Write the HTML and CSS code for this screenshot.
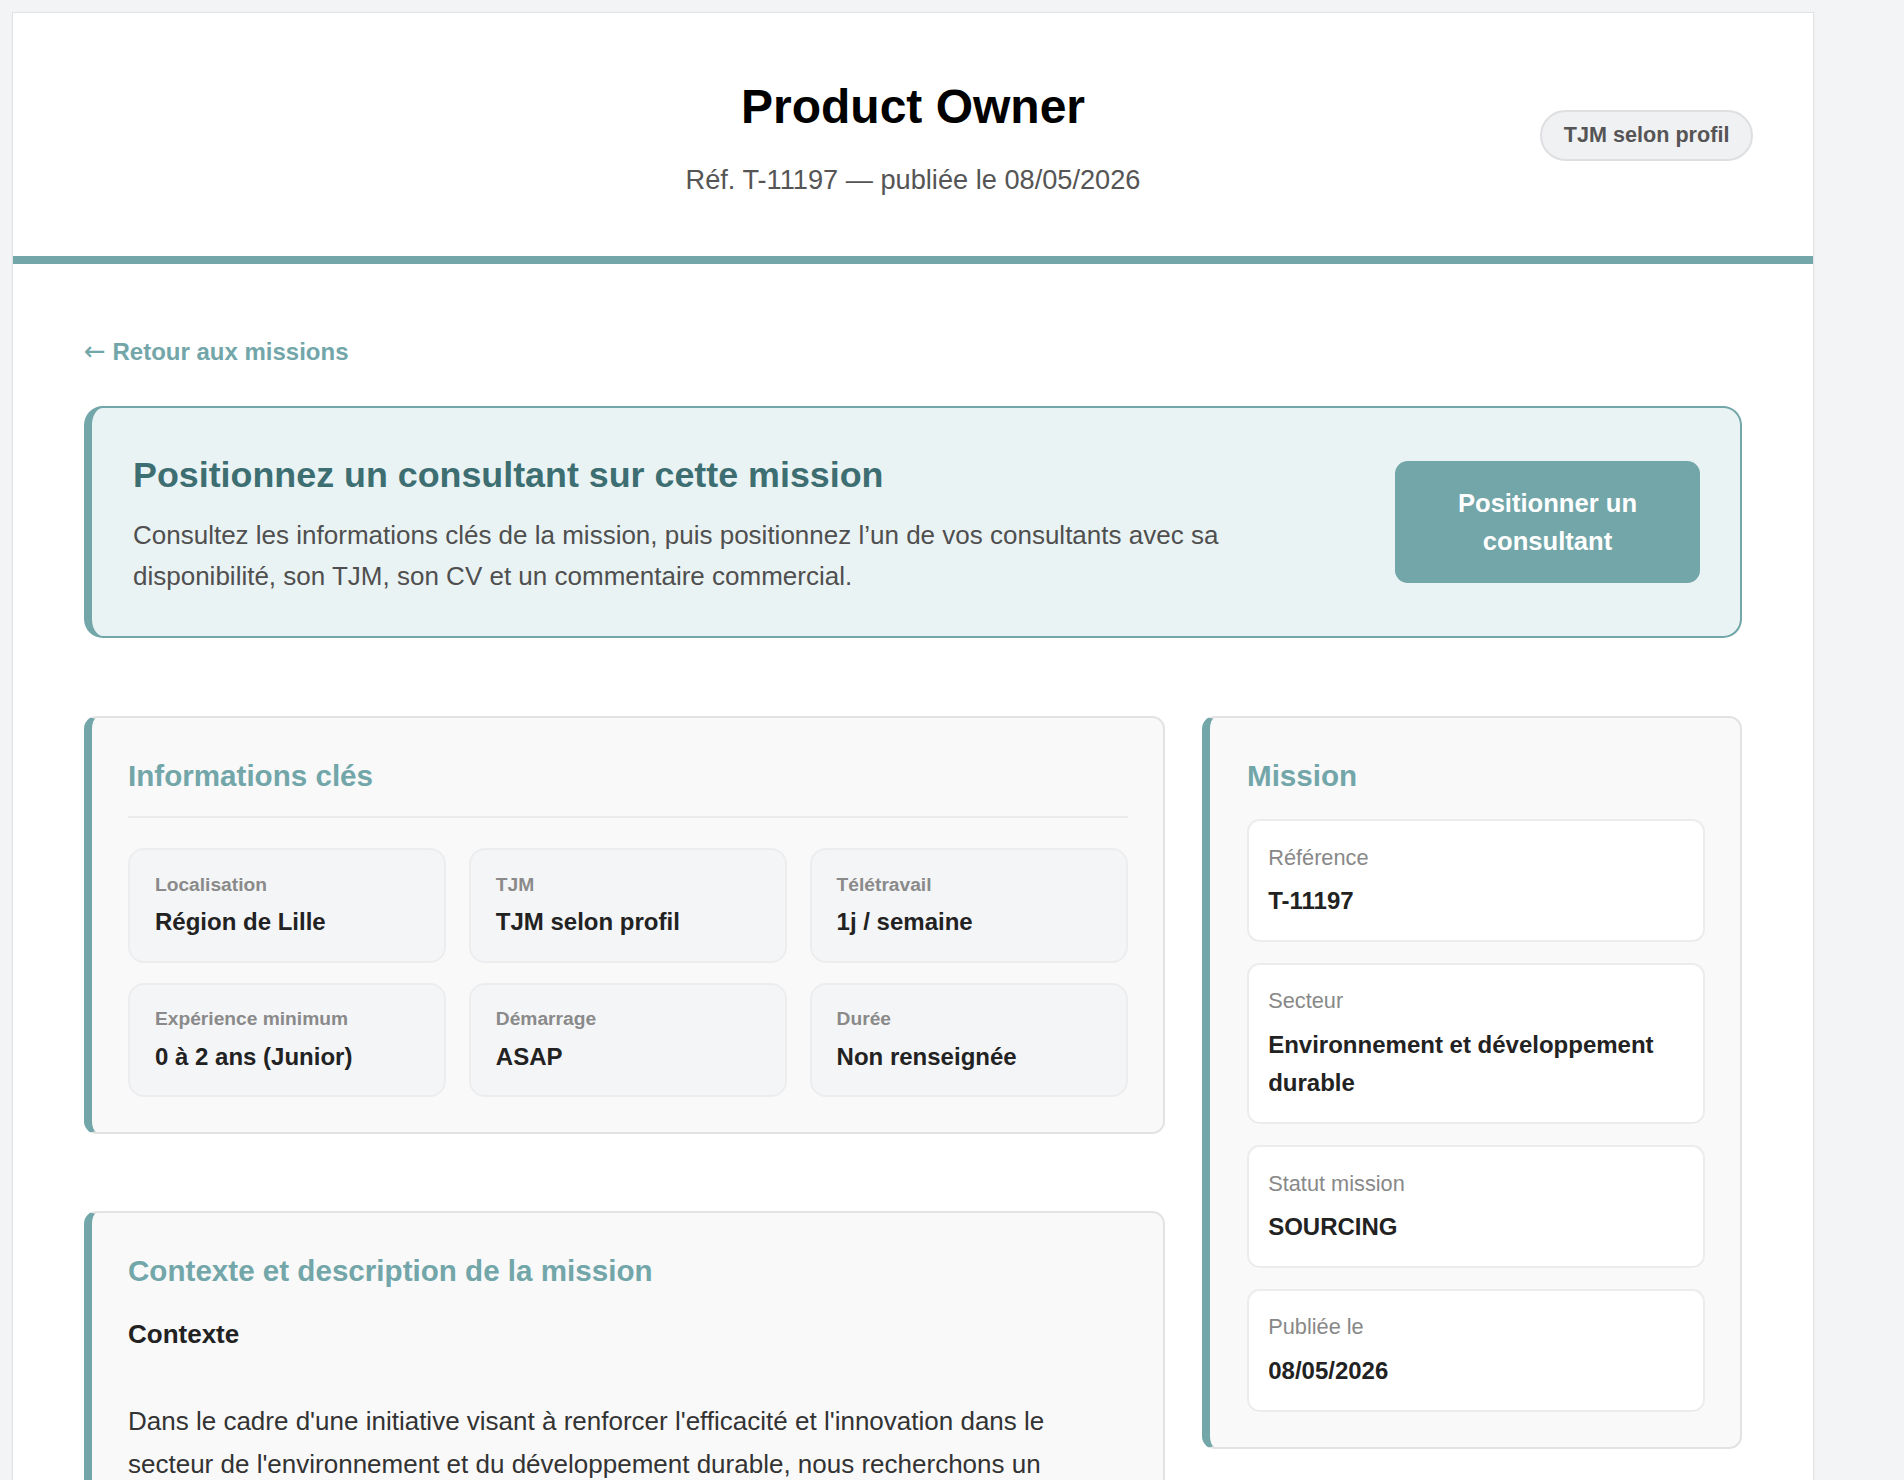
FILE: index.html
```html
<!DOCTYPE html>
<html lang="fr">
<head>
<meta charset="utf-8">
<title>Product Owner — T-11197</title>
<link rel="stylesheet" href="styles.css">
</head>
<body>
<div class="page">
  <header class="hdr">
    <div class="hdr-left"></div>
    <div class="hdr-main">
      <h1 class="hdr-title">Product Owner</h1>
      <p class="hdr-sub">Réf. T-11197 — publiée le 08/05/2026</p>
    </div>
    <div class="hdr-side"><span class="badge">TJM selon profil</span></div>
  </header>

  <main class="content">
    <a class="back" href="#"><span class="back-arrow">←</span> Retour aux missions</a>

    <section class="cta">
      <div class="cta-text">
        <h2 class="cta-title">Positionnez un consultant sur cette mission</h2>
        <p class="cta-desc">Consultez les informations clés de la mission, puis positionnez l’un de vos consultants avec sa disponibilité, son TJM, son CV et un commentaire commercial.</p>
      </div>
      <a class="cta-btn" href="#">Positionner un consultant</a>
    </section>

    <div class="layout">
      <div class="col-main">
        <section class="card">
          <h3 class="card-title card-title--rule">Informations clés</h3>
          <div class="tiles">
            <div class="tile"><div class="tile-label">Localisation</div><div class="tile-value">Région de Lille</div></div>
            <div class="tile"><div class="tile-label">TJM</div><div class="tile-value">TJM selon profil</div></div>
            <div class="tile"><div class="tile-label">Télétravail</div><div class="tile-value">1j / semaine</div></div>
            <div class="tile"><div class="tile-label">Expérience minimum</div><div class="tile-value">0 à 2 ans (Junior)</div></div>
            <div class="tile"><div class="tile-label">Démarrage</div><div class="tile-value">ASAP</div></div>
            <div class="tile"><div class="tile-label">Durée</div><div class="tile-value">Non renseignée</div></div>
          </div>
        </section>

        <section class="card">
          <h3 class="card-title card-title--ctx">Contexte et description de la mission</h3>
          <div class="desc"><strong class="desc-head">Contexte</strong><br><br>Dans le cadre d'une initiative visant à renforcer l'efficacité et l'innovation dans le secteur de l'environnement et du développement durable, nous recherchons un Product Owner junior pour accompagner les équipes produit dans la conception et l'amélioration continue de nos solutions numériques.<br><br><strong class="desc-head">Missions</strong><br><br>Recueillir et formaliser les besoins métiers, rédiger les user stories, prioriser le backlog et assurer le suivi des livraisons en lien avec les équipes de développement.</div>
        </section>
      </div>

      <aside class="card side">
        <h3 class="card-title card-title--side">Mission</h3>
        <div class="facts">
          <div class="fact"><div class="fact-label">Référence</div><div class="fact-value">T-11197</div></div>
          <div class="fact"><div class="fact-label">Secteur</div><div class="fact-value">Environnement et développement durable</div></div>
          <div class="fact"><div class="fact-label">Statut mission</div><div class="fact-value">SOURCING</div></div>
          <div class="fact"><div class="fact-label">Publiée le</div><div class="fact-value">08/05/2026</div></div>
        </div>
      </aside>
    </div>
  </main>
</div>
</body>
</html>
```

FILE: styles.css
```css
* { box-sizing: border-box; }

html, body { margin: 0; padding: 0; }

body {
  background: #f3f4f6;
  font-family: "Liberation Sans", Arial, Helvetica, sans-serif;
  color: #222;
  padding: 12px 0 0 12px;
}

.page {
  width: 1802px;
  background: #ffffff;
  border: 1px solid #e1e2e4;
  box-shadow: 0 1px 3px rgba(0, 0, 0, 0.04);
}

/* Header */
.hdr {
  display: grid;
  grid-template-columns: 1fr auto 1fr;
  align-items: center;
  padding: 65px 60px 54.6px;
  border-bottom: 8px solid #72a6a9;
}

.hdr-main { text-align: center; }

.hdr-title {
  margin: 0 0 22.3px;
  font-size: 48px;
  line-height: 57.6px;
  font-weight: 700;
  color: #000;
}

.hdr-sub {
  margin: 0;
  font-size: 27.2px;
  line-height: 43.5px;
  color: #555;
}

.hdr-side {
  display: flex;
  justify-content: flex-end;
  align-self: center;
  margin-top: -8px;
}

.badge {
  display: inline-block;
  padding: 6.4px 21.6px;
  font-size: 21.6px;
  line-height: 34.6px;
  font-weight: 700;
  color: #555;
  background: #f0f1f3;
  border: 2px solid #dedfe1;
  border-radius: 999px;
}

/* Content */
.content {
  padding: 68px 71px 0;
}

.back {
  display: inline-block;
  margin-bottom: 35px;
  font-size: 24px;
  line-height: 38.4px;
  font-weight: 700;
  color: #72a6a9;
  text-decoration: none;
}

.back-arrow {
  font-family: "DejaVu Sans", sans-serif;
  font-weight: 400;
  font-size: 26px;
}

/* Call to action */
.cta {
  display: flex;
  align-items: center;
  gap: 40px;
  padding: 38.5px 40px 38.5px 41px;
  background: #eaf3f4;
  border: 2px solid #72a6a9;
  border-left-width: 8px;
  border-radius: 19px;
  margin-bottom: 78px;
}

.cta-text { flex: 1; min-width: 0; }

.cta-title {
  margin: 0 0 11px;
  font-size: 35.84px;
  line-height: 57.3px;
  font-weight: 700;
  color: #3d6e72;
}

.cta-desc {
  margin: 0;
  max-width: 1150px;
  font-size: 26px;
  line-height: 41px;
  color: #4f4f4f;
}

.cta-btn {
  flex-shrink: 0;
  width: 305px;
  padding: 22.6px 20px;
  background: #72a6a9;
  color: #ffffff;
  border-radius: 12.8px;
  font-size: 25.6px;
  line-height: 38.4px;
  font-weight: 700;
  text-align: center;
  text-decoration: none;
}

/* Two columns */
.layout {
  display: grid;
  grid-template-columns: minmax(0, 1fr) 540px;
  gap: 37px;
  align-items: start;
}

.col-main {
  display: flex;
  flex-direction: column;
  gap: 77px;
}

.card {
  background: #f9f9f9;
  border: 2px solid #e2e2e2;
  border-left: 8px solid #72a6a9;
  border-radius: 12.8px;
  padding: 34px 35px 35px 36px;
}

.card-title {
  margin: 0;
  font-size: 29.6px;
  line-height: 47.4px;
  font-weight: 700;
  color: #72a6a9;
}

.card-title--rule {
  padding-bottom: 17px;
  border-bottom: 2px solid #ebebeb;
  margin-bottom: 30px;
}

.card-title--ctx { margin-bottom: 18.4px; }

.card-title--side { margin-bottom: 20px; }

/* Tiles */
.tiles {
  display: grid;
  grid-template-columns: repeat(3, minmax(0, 1fr));
  column-gap: 22.4px;
  row-gap: 20px;
}

.tile {
  background: #f4f5f7;
  border: 2px solid #ecedef;
  border-radius: 16px;
  padding: 19.5px 25px 19px;
}

.tile-label {
  margin-bottom: 3px;
  font-size: 19.2px;
  line-height: 30.7px;
  font-weight: 700;
  color: #8a8a8a;
}

.tile-value {
  font-size: 24px;
  line-height: 38.4px;
  font-weight: 700;
  color: #222;
}

/* Description */
.desc {
  font-size: 26px;
  line-height: 43.2px;
  color: #333;
  padding-bottom: 10px;
}

.desc-head {
  font-weight: 700;
  color: #222;
}

/* Sidebar */
.side { padding-left: 37px; }

.facts {
  display: flex;
  flex-direction: column;
  gap: 21px;
}

.fact {
  background: #ffffff;
  border: 2px solid #ececec;
  border-radius: 12.8px;
  padding: 19.6px 19.2px;
}

.fact-label {
  margin-bottom: 6.4px;
  font-size: 21.76px;
  line-height: 34.8px;
  color: #888;
}

.fact-value {
  font-size: 24px;
  line-height: 38.4px;
  font-weight: 700;
  color: #222;
}
```
